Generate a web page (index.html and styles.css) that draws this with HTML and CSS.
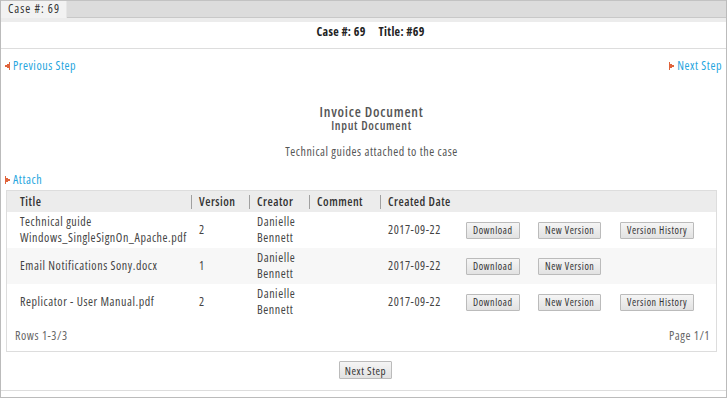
FILE: index.html
```html
<!DOCTYPE html>
<html lang="en">
<head>
  <meta charset="UTF-8">
  <title>Case #: 69</title>
  <link rel="stylesheet" href="styles.css">
</head>
<body>
  <div class="frame">
    <div class="tabbar">
      <div class="tab">Case #: 69</div>
    </div>
    <div class="strip"></div>

    <div class="case-head">
      <span>Case #: 69</span>
      <span>Title: #69</span>
    </div>

    <div class="content">
      <div class="steps">
        <a class="link" href="#">
          <svg class="arrow" width="5" height="8" viewBox="0 0 5 8"><path d="M4 0h1v8h-1zM2 2h2v4h-2zM0 3h2v2h-2z" fill="#e0643c"/></svg>Previous Step
        </a>
        <a class="link" href="#">
          <svg class="arrow" width="5" height="8" viewBox="0 0 5 8"><path d="M0 0h1v8h-1zM1 2h2v4h-2zM3 3h2v2h-2z" fill="#e0643c"/></svg>Next Step
        </a>
      </div>

      <div class="doc-title">
        <h2>Invoice Document</h2>
        <h3>Input Document</h3>
        <p>Technical guides attached to the case</p>
      </div>

      <div class="attach-row">
        <a class="link" href="#">
          <svg class="arrow" width="5" height="8" viewBox="0 0 5 8"><path d="M0 0h1v8h-1zM1 2h2v4h-2zM3 3h2v2h-2z" fill="#e0643c"/></svg>Attach
        </a>
      </div>

      <div class="grid-box">
        <table class="grid">
          <colgroup>
            <col style="width:184px">
            <col style="width:58px">
            <col style="width:60px">
            <col style="width:71px">
            <col style="width:78px">
            <col style="width:72px">
            <col style="width:82px">
            <col>
          </colgroup>
          <thead>
            <tr>
              <th>Title</th>
              <th>Version</th>
              <th>Creator</th>
              <th>Comment</th>
              <th>Created Date</th>
              <th class="plain"></th>
              <th class="plain"></th>
              <th class="plain"></th>
            </tr>
          </thead>
          <tbody>
            <tr>
              <td>Technical guide Windows_SingleSignOn_Apache.pdf</td>
              <td>2</td>
              <td>Danielle Bennett</td>
              <td></td>
              <td>2017-09-22</td>
              <td><button class="btn">Download</button></td>
              <td><button class="btn">New Version</button></td>
              <td><button class="btn">Version History</button></td>
            </tr>
            <tr>
              <td>Email Notifications Sony.docx</td>
              <td>1</td>
              <td>Danielle Bennett</td>
              <td></td>
              <td>2017-09-22</td>
              <td><button class="btn">Download</button></td>
              <td><button class="btn">New Version</button></td>
              <td></td>
            </tr>
            <tr>
              <td>Replicator - User Manual.pdf</td>
              <td>2</td>
              <td>Danielle Bennett</td>
              <td></td>
              <td>2017-09-22</td>
              <td><button class="btn">Download</button></td>
              <td><button class="btn">New Version</button></td>
              <td><button class="btn">Version History</button></td>
            </tr>
          </tbody>
        </table>
        <div class="grid-foot">
          <span>Rows 1-3/3</span>
          <span>Page 1/1</span>
        </div>
      </div>

      <div class="actions">
        <button class="btn btn-main">Next Step</button>
      </div>
    </div>
  </div>
</body>
</html>
```

FILE: styles.css
```css
body {
  margin: 0;
  font-family: "Open Sans", "DejaVu Sans", sans-serif;
  font-size: 12px;
  line-height: 16px;
  font-stretch: 75%;
  letter-spacing: 0.55px;
  color: #444;
  background: #fff;
}
.frame {
  height: 398px;
  box-sizing: border-box;
  border: 1px solid #bbb;
  border-top: none;
  display: flex;
  flex-direction: column;
}
.tabbar {
  height: 16px;
  background: #dcdcdc;
  border-top: 1px solid #c2c2c2;
  border-bottom: 1px solid #c8c8c8;
  display: flex;
}
.tab {
  background: #f2f2f2;
  padding: 0 6px 0 7px;
  line-height: 16px;
  height: 17px;
  color: #333;
  letter-spacing: 1px;
  border-right: 1px solid #e6e6e6;
}
.strip {
  height: 4px;
  background: #ececec;
}
.case-head {
  display: flex;
  justify-content: center;
  gap: 13px;
  font-weight: bold;
  letter-spacing: 0.3px;
  color: #222;
  height: 24px;
  padding: 2px 0 0 14px;
  border-bottom: 1px solid #ddd;
}
.content {
  flex: 1;
  padding: 0 4px;
  border-bottom: 1px solid #ddd;
  margin-bottom: 6px;
}
.steps {
  display: flex;
  justify-content: space-between;
  padding-top: 1px;
  height: 32px;
}
.link {
  color: #25a5de;
  text-decoration: none;
  display: inline-flex;
  align-items: center;
  gap: 3px;
}
.doc-title {
  text-align: center;
  padding: 23px 0 0 16px;
  height: 67px;
}
.doc-title h2 {
  margin: 0;
  font-size: 14px;
  line-height: 14px;
  font-weight: 600;
  letter-spacing: 0.75px;
  color: #555;
}
.doc-title h3 {
  margin: 0;
  font-size: 12px;
  line-height: 14px;
  font-weight: 600;
  letter-spacing: 0.7px;
  color: #555;
}
.doc-title p {
  margin: 11px 0 0;
  color: #555;
}
.attach-row {
  display: flex;
  height: 18px;
  align-items: flex-start;
}
.grid-box {
  margin: 0 5px 0 1px;
  border: 1px solid #ddd;
}
.grid {
  width: 100%;
  border-collapse: collapse;
  table-layout: fixed;
}
.grid th {
  background: #ececec;
  height: 21px;
  padding: 0 0 0 8px;
  text-align: left;
  font-weight: 600;
  letter-spacing: 0.5px;
  color: #333;
  background-image: linear-gradient(#a0a0a0, #a0a0a0);
  background-size: 1px 14px;
  background-position: left center;
  background-repeat: no-repeat;
}
.grid th:first-child {
  padding-left: 13px;
  background-image: none;
}
.grid th.plain { background-image: none; }
.grid td {
  height: 36px;
  padding: 0 0 0 8px;
  color: #444;
}
.grid td:first-child { padding-left: 13px; }
.grid tbody tr:nth-child(even) td { background: #f7f7f7; }
.btn {
  font-family: inherit;
  font-stretch: inherit;
  font-size: 10px;
  letter-spacing: 0.55px;
  color: #333;
  height: 17px;
  padding: 0 6px;
  border: 1px solid #bbb;
  border-radius: 1px;
  background: linear-gradient(#f5f5f5, #e2e2e2);
}
.btn-main {
  font-size: 11px;
  height: 18px;
  padding: 0 5px;
}
.grid-foot {
  display: flex;
  justify-content: space-between;
  height: 31px;
  align-items: center;
  padding: 0 6px 0 8px;
  color: #666;
}
.actions {
  display: flex;
  justify-content: center;
  padding: 9px 0 0 4px;
}
```
